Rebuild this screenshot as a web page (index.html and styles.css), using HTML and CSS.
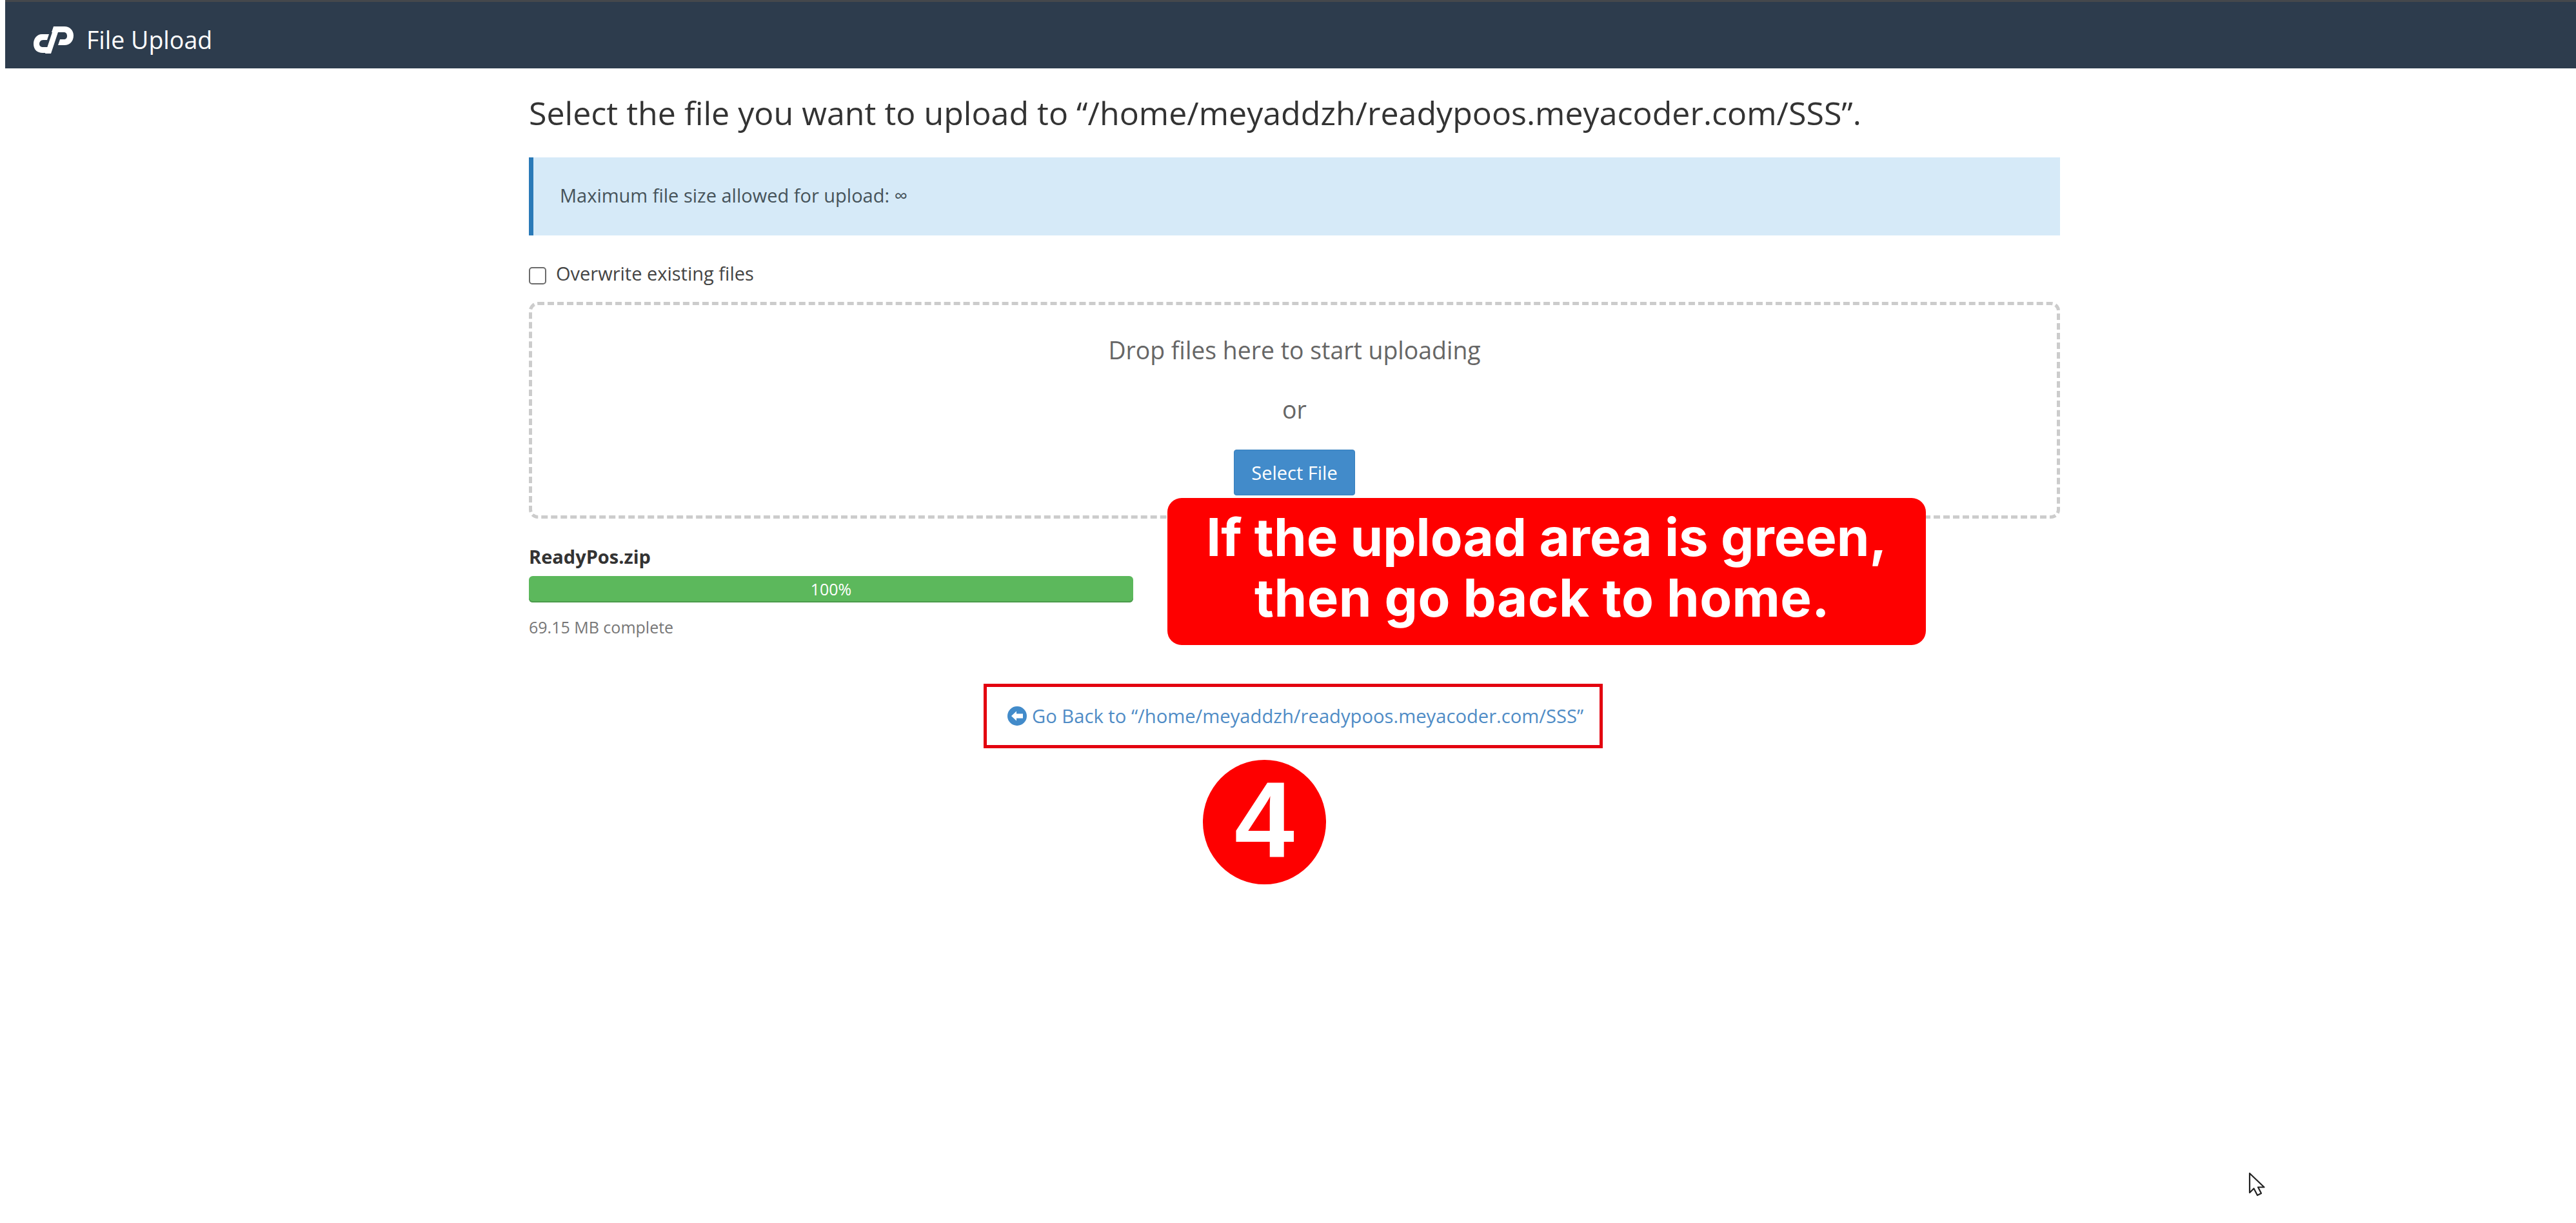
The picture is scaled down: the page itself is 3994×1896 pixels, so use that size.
FILE: index.html
```html
<!DOCTYPE html>
<html lang="en">
<head>
<meta charset="utf-8">
<title>File Upload</title>
<link rel="stylesheet" href="styles.css">
</head>
<body>
<header class="topbar">
  <svg class="logo" viewBox="0 0 62 42" aria-hidden="true">
    <path fill="#fff" d="M24 12H13C5 12 0 19 0 27C0 36 6 41 14 41H20L23 32H15C11 32 9 30 9 27C9 24 11 21 15 21H21Z"/>
    <path fill="#fff" d="M31 0H48C56 0 62 6 62 14C62 23 56 29 48 29H38L41 20H47C50 20 52 18 52 15C52 11 50 9 47 9H28Z"/>
    <path fill="#fff" d="M29 9H38L27 42H18Z"/>
  </svg>
  <span class="topbar-title">File Upload</span>
</header>
<main class="content">
  <h1 class="title">Select the file you want to upload to “/home/meyaddzh/readypoos.meyacoder.com/SSS”.</h1>
  <div class="info">Maximum file size allowed for upload: ∞</div>
  <label class="overwrite"><input class="check" type="checkbox"><span>Overwrite existing files</span></label>
  <section class="dropzone">
    <p class="drop-line">Drop files here to start uploading</p>
    <p class="drop-or">or</p>
    <button class="select-btn" type="button">Select File</button>
  </section>
  <div class="file-name">ReadyPos.zip</div>
  <div class="progress"><div class="progress-bar">100%</div></div>
  <div class="complete">69.15 MB complete</div>
  <div class="back-box">
    <a class="back-link" href="#">
      <svg class="back-icon" viewBox="0 0 30 30" aria-hidden="true">
        <circle cx="15" cy="15" r="15" fill="#428bca"/>
        <path fill="#fff" d="M6 15L14 7.500V11.500H24V18.500H14V22.500Z"/>
      </svg>
      <span>Go Back to “/home/meyaddzh/readypoos.meyacoder.com/SSS”</span>
    </a>
  </div>
</main>
<div class="callout">If the upload area is green,<br><span class="callout-second">then go back to home.</span></div>
<div class="step">4</div>
<svg class="cursor" viewBox="0 0 26 40" aria-hidden="true">
  <path fill="#fff" stroke="#222" stroke-width="2.200" stroke-linejoin="round" d="M2 2V32L8.500 25.500L14 36L20 33L15 23.500H24.500Z"/>
</svg>
</body>
</html>
```
FILE: styles.css
```css
html, body {
  margin: 0;
  padding: 0;
  background: #fff;
}
body {
  position: relative;
  width: 3994px;
  height: 1896px;
  overflow: hidden;
  font-family: "Open Sans", sans-serif;
  color: #333;
}
.topbar {
  display: flex;
  align-items: center;
  gap: 20px;
  box-sizing: border-box;
  height: 106px;
  margin-left: 8px;
  padding: 14px 0 0 44px;
  background: #2d3c4d;
  border-top: 3px solid #45484c;
}
.logo {
  width: 62px;
  height: 42px;
  flex: none;
}
.topbar-title {
  font-size: 37.500px;
  color: #fff;
}
.content {
  box-sizing: border-box;
  width: 2374px;
  margin-left: 820px;
}
.title {
  margin: 35px 0 0;
  font-size: 50.100px;
  font-weight: 400;
  line-height: 68px;
  color: #333;
  white-space: nowrap;
}
.info {
  box-sizing: border-box;
  height: 121px;
  margin-top: 35px;
  padding: 0 0 4px 41px;
  display: flex;
  align-items: center;
  font-size: 29px;
  color: #46535a;
  background: #d6eaf8;
  border-left: 7px solid #2a7ab8;
}
.overwrite {
  display: flex;
  align-items: center;
  gap: 15px;
  height: 40px;
  margin-top: 38px;
  font-size: 29px;
  color: #444;
}
.check {
  appearance: none;
  box-sizing: border-box;
  width: 27px;
  height: 27px;
  margin: 8px 0 0;
  flex: none;
  background: #fff;
  border: 2px solid #6b6b6b;
  border-radius: 5px;
}
.dropzone {
  box-sizing: border-box;
  height: 336px;
  margin-top: 25px;
  padding-top: 45px;
  display: flex;
  flex-direction: column;
  align-items: center;
  border: 5px dashed #ccc;
  border-radius: 14px;
}
.drop-line, .drop-or {
  margin: 0;
  font-size: 37.400px;
  line-height: 50px;
  color: #666;
}
.drop-or {
  margin-top: 42px;
}
.select-btn {
  box-sizing: border-box;
  width: 188px;
  height: 71px;
  margin-top: 37px;
  padding: 0;
  font-family: inherit;
  font-size: 29px;
  color: #fff;
  background: #428bca;
  border: 1px solid #357ebd;
  border-radius: 4px;
}
.file-name {
  margin-top: 39px;
  font-size: 29px;
  font-weight: 700;
  line-height: 40px;
  color: #333;
}
.progress {
  width: 937px;
  height: 41px;
  margin-top: 10px;
  border-radius: 6px;
  overflow: hidden;
  background: #5cb85c;
  box-shadow: inset 0 -2px 0 #4a9a4a;
}
.progress-bar {
  font-size: 25px;
  line-height: 41px;
  text-align: center;
  color: #fff;
}
.complete {
  margin-top: 20px;
  font-size: 25px;
  line-height: 36px;
  color: #777;
}
.back-box {
  box-sizing: border-box;
  display: flex;
  align-items: center;
  width: 960px;
  height: 100px;
  margin: 70px 0 0 705px;
  padding-left: 32px;
  border: 5px solid #e3000f;
}
.back-link {
  display: flex;
  align-items: center;
  gap: 8px;
  font-size: 29.200px;
  color: #4f8cc6;
  text-decoration: none;
  white-space: nowrap;
}
.back-icon {
  width: 30px;
  height: 30px;
  flex: none;
}
.callout {
  position: absolute;
  left: 1810px;
  top: 772px;
  box-sizing: border-box;
  width: 1176px;
  height: 228px;
  padding-top: 14px;
  font-family: Inter, sans-serif;
  font-size: 81.500px;
  font-weight: 700;
  line-height: 94px;
  text-align: center;
  color: #fff;
  background: #fe0000;
  border-radius: 22px;
}
.callout-second {
  display: inline-block;
  padding-right: 14px;
  letter-spacing: 0.400px;
}
.step {
  position: absolute;
  left: 1865px;
  top: 1178px;
  box-sizing: border-box;
  width: 191px;
  height: 193px;
  padding-bottom: 8px;
  display: flex;
  align-items: center;
  justify-content: center;
  font-family: "Liberation Sans", sans-serif;
  font-size: 167px;
  font-weight: 700;
  color: #fff;
  background: #fe0000;
  border-radius: 50%;
}
.cursor {
  position: absolute;
  left: 3486px;
  top: 1817px;
  width: 26px;
  height: 40px;
}
```
